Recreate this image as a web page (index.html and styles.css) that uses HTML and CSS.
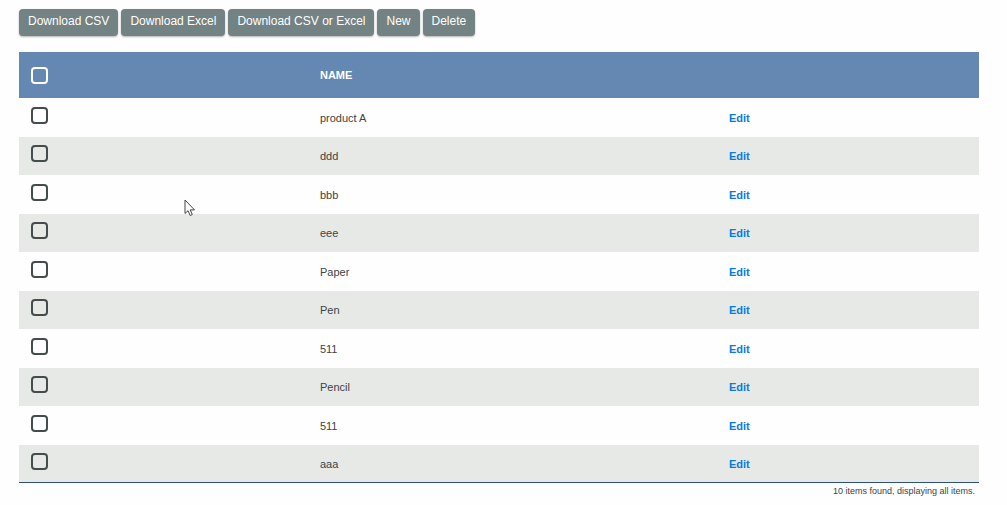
FILE: index.html
```
<!DOCTYPE html>
<html lang="en">
<head>
    <meta charset="UTF-8">
    <meta name="viewport" content="width=device-width, initial-scale=1.0">
    <title>Products</title>
    <link rel="stylesheet" href="styles.css">
</head>
<body>
    <div class="toolbar">
        <button type="button" class="btn">Download CSV</button>
        <button type="button" class="btn">Download Excel</button>
        <button type="button" class="btn">Download CSV or Excel</button>
        <button type="button" class="btn">New</button>
        <button type="button" class="btn">Delete</button>
    </div>
    <table class="list">
        <thead>
            <tr>
                <th class="col-check"><input type="checkbox" aria-label="Select all"></th>
                <th class="col-name">NAME</th>
                <th class="col-edit"></th>
            </tr>
        </thead>
        <tbody>
            <tr>
                <td><input type="checkbox" aria-labelledby="item1"></td>
                <td id="item1">product A</td>
                <td><a href="#">Edit</a></td>
            </tr>
            <tr>
                <td><input type="checkbox" aria-labelledby="item2"></td>
                <td id="item2">ddd</td>
                <td><a href="#">Edit</a></td>
            </tr>
            <tr>
                <td><input type="checkbox" aria-labelledby="item3"></td>
                <td id="item3">bbb</td>
                <td><a href="#">Edit</a></td>
            </tr>
            <tr>
                <td><input type="checkbox" aria-labelledby="item4"></td>
                <td id="item4">eee</td>
                <td><a href="#">Edit</a></td>
            </tr>
            <tr>
                <td><input type="checkbox" aria-labelledby="item5"></td>
                <td id="item5">Paper</td>
                <td><a href="#">Edit</a></td>
            </tr>
            <tr>
                <td><input type="checkbox" aria-labelledby="item6"></td>
                <td id="item6">Pen</td>
                <td><a href="#">Edit</a></td>
            </tr>
            <tr>
                <td><input type="checkbox" aria-labelledby="item7"></td>
                <td id="item7">511</td>
                <td><a href="#">Edit</a></td>
            </tr>
            <tr>
                <td><input type="checkbox" aria-labelledby="item8"></td>
                <td id="item8">Pencil</td>
                <td><a href="#">Edit</a></td>
            </tr>
            <tr>
                <td><input type="checkbox" aria-labelledby="item9"></td>
                <td id="item9">511</td>
                <td><a href="#">Edit</a></td>
            </tr>
            <tr>
                <td><input type="checkbox" aria-labelledby="item10"></td>
                <td id="item10">aaa</td>
                <td><a href="#">Edit</a></td>
            </tr>
        </tbody>
    </table>
    <p class="summary">10 items found, displaying all items.</p>
    <svg class="cursor" width="12" height="18" viewBox="0 0 12 18" aria-hidden="true">
        <path d="M1 1 V14.5 L4 11.7 L6.2 16.5 L8.3 15.5 L6.2 10.9 H10.5 Z" fill="#fff" stroke="#444" stroke-width="1"/>
    </svg>
</body>
</html>
```
FILE: styles.css
```
* {
    box-sizing: border-box;
}
body {
    margin: 0;
    padding: 9px 28px 9px 19px;
    background-color: #fefefe;
    color: #3c4444;
    font-family: "Liberation Sans", Arial, sans-serif;
    font-size: 11px;
    line-height: 16px;
}
.toolbar {
    display: flex;
    flex-wrap: wrap;
    gap: 3px;
    margin-bottom: 16px;
}
.btn {
    padding: 4px 9px 7px;
    border: none;
    border-radius: 4px;
    background-color: #738282;
    box-shadow: 0 1px 2px rgba(0, 0, 0, 0.3);
    color: #fff;
    font-family: inherit;
    font-size: 12px;
    line-height: 16px;
    cursor: pointer;
}
.list {
    width: 100%;
    table-layout: fixed;
    border-collapse: separate;
    border-spacing: 0;
}
.list th,
.list td {
    padding: 0 12px;
    text-align: left;
}
.list th {
    height: 46px;
    background-color: #6488b2;
    color: #fff;
}
.list td {
    height: 38px;
}
.list tr:nth-child(odd) td {
    height: 39px;
}
.list tbody tr:nth-child(even) {
    background-color: #e7e9e6;
}
.list tbody tr:last-child td {
    border-bottom: 1px solid #2d5078;
}
.col-check {
    width: 30.1%;
}
.col-name {
    width: 42.6%;
}
.list input {
    appearance: none;
    display: block;
    width: 17px;
    height: 17px;
    margin: 0;
    border: 2px solid #fff;
    border-radius: 4px;
}
.list td input {
    margin-bottom: 5px;
    border-color: #454c4c;
}
.list input:checked {
    background-color: #8fb0d4;
}
.list a {
    color: #087be0;
    font-weight: bold;
    text-decoration: none;
}
.summary {
    margin: 0;
    padding-right: 4px;
    font-size: 9px;
    text-align: right;
}
.cursor {
    position: absolute;
    top: 199px;
    left: 184px;
}
```
